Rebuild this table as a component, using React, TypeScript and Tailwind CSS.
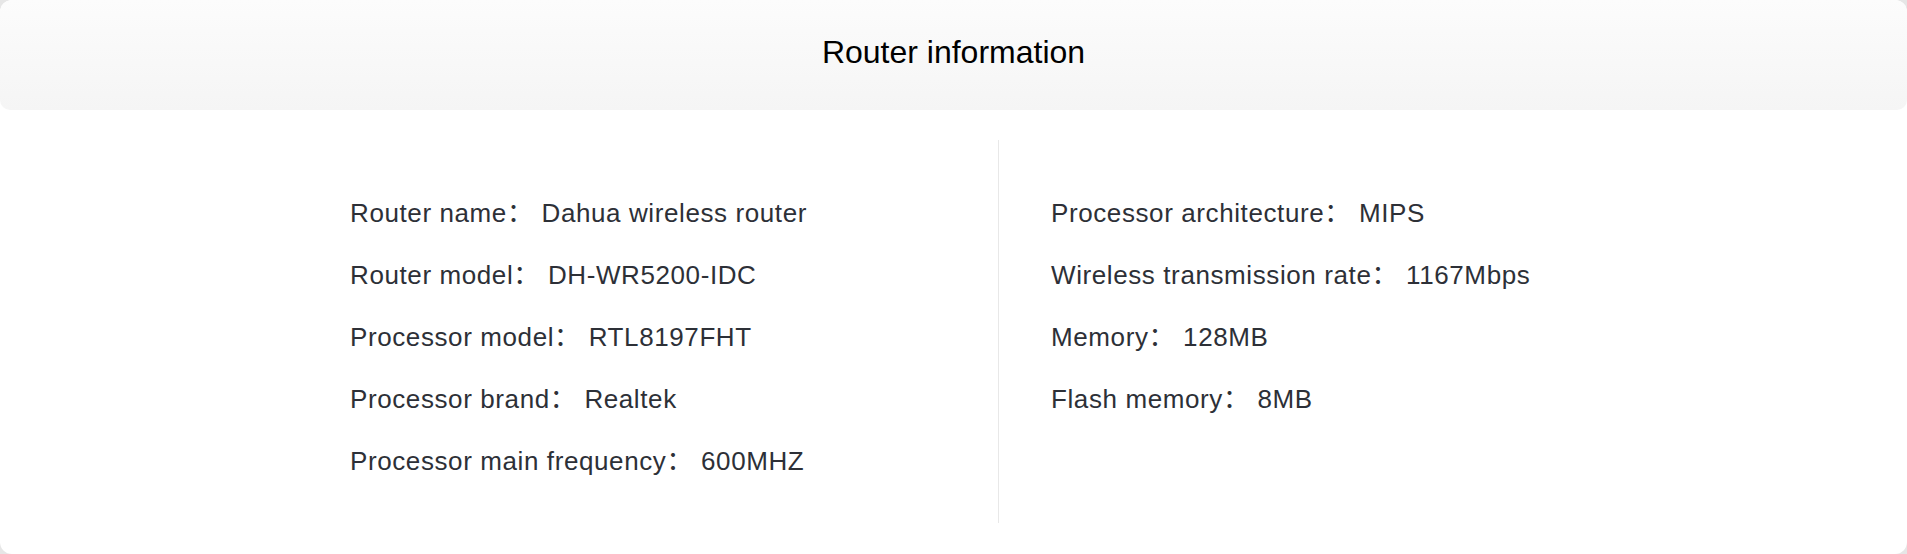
const left = [
  ["Router name", "Dahua wireless router"],
  ["Router model", "DH-WR5200-IDC"],
  ["Processor model", "RTL8197FHT"],
  ["Processor brand", "Realtek"],
  ["Processor main frequency", "600MHZ"],
];

const right = [
  ["Processor architecture", "MIPS"],
  ["Wireless transmission rate", "1167Mbps"],
  ["Memory", "128MB"],
  ["Flash memory", "8MB"],
];

function InfoRow({ label, value }: { label: string; value: string }) {
  return (
    <div className="h-[62px] flex items-center whitespace-nowrap tracking-[0.6px]">
      <span>{label}</span>
      <span className="mr-[8px]">：</span>
      <span>{value}</span>
    </div>
  );
}

export default function App() {
  return (
    <div className="w-[1907px] h-[554px] bg-[#e6e6e6]">
      <div
        className="h-full bg-white rounded-[12px] overflow-hidden text-[#2d3037]"
        style={{ fontFamily: '"Liberation Sans", "Noto Sans CJK SC", sans-serif' }}
      >
        {/* Header */}
        <div className="h-[110px] rounded-[10px] bg-gradient-to-b from-[#fcfcfc] to-[#f5f5f5] flex items-center justify-center">
          <h1 className="text-[32px] text-black font-normal mb-[6px]">Router information</h1>
        </div>

        {/* Body */}
        <div className="flex pl-[350px] pt-[30px] text-[26px]">
          <div className="w-[648px] pt-[42px]">
            {left.map(([l, v]) => (
              <InfoRow key={l} label={l} value={v} />
            ))}
          </div>

          <div className="w-px h-[383px] bg-[#e8e8e8]" />

          <div className="pl-[52px] pt-[42px]">
            {right.map(([l, v]) => (
              <InfoRow key={l} label={l} value={v} />
            ))}
          </div>
        </div>
      </div>
    </div>
  );
}
